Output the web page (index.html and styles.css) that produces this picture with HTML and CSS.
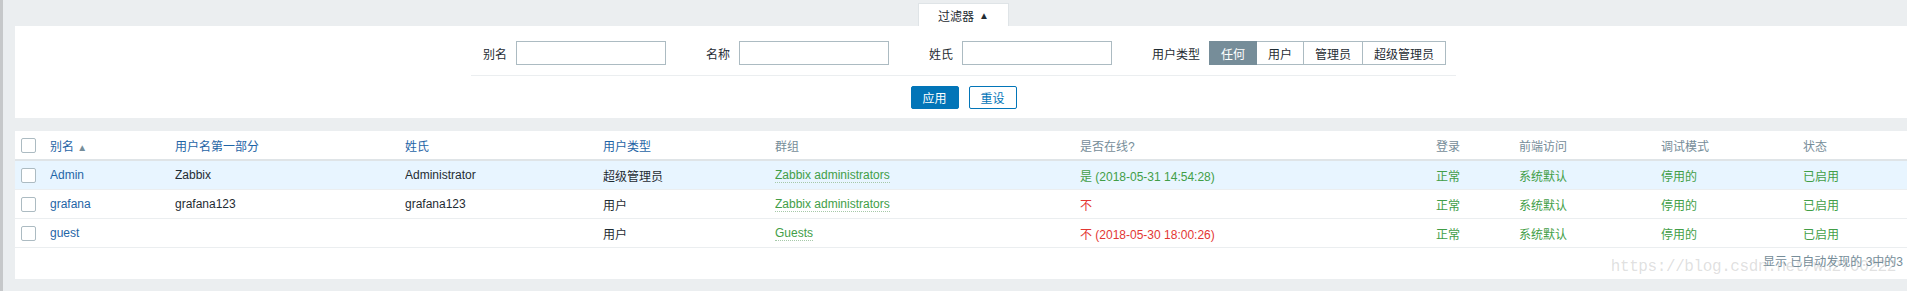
FILE: index.html
```html
<!DOCTYPE html>
<html lang="zh-CN">
<head>
  <meta charset="UTF-8">
  <title>用户</title>
  <link rel="stylesheet" href="styles.css">
</head>
<body>
  <div class="page">

    <div class="filter-tabs">
      <div class="tab">过滤器 <span class="arrow">▲</span></div>
    </div>

    <div class="filter">
      <div class="filter-inner">
        <div class="filter-row">
          <label class="lbl">别名</label>
          <input class="field" type="text">
          <label class="lbl spaced">名称</label>
          <input class="field" type="text">
          <label class="lbl spaced">姓氏</label>
          <input class="field" type="text">
          <label class="lbl spaced">用户类型</label>
          <div class="segmented">
            <span class="seg active">任何</span>
            <span class="seg">用户</span>
            <span class="seg">管理员</span>
            <span class="seg">超级管理员</span>
          </div>
        </div>
        <div class="filter-buttons">
          <button class="btn primary">应用</button>
          <button class="btn alt">重设</button>
        </div>
      </div>
    </div>

    <div class="list">
      <table class="users">
        <colgroup>
          <col style="width:35px">
          <col style="width:125px">
          <col style="width:230px">
          <col style="width:198px">
          <col style="width:172px">
          <col style="width:305px">
          <col style="width:356px">
          <col style="width:83px">
          <col style="width:142px">
          <col style="width:142px">
          <col>
        </colgroup>
        <thead>
          <tr>
            <th class="cb-cell"><span class="cb"></span></th>
            <th><a class="sort">别名</a> <span class="sort-arrow">▲</span></th>
            <th><a class="sort">用户名第一部分</a></th>
            <th><a class="sort">姓氏</a></th>
            <th><a class="sort">用户类型</a></th>
            <th>群组</th>
            <th>是否在线?</th>
            <th>登录</th>
            <th>前端访问</th>
            <th>调试模式</th>
            <th>状态</th>
          </tr>
        </thead>
        <tbody>
          <tr class="hover">
            <td class="cb-cell"><span class="cb"></span></td>
            <td><a class="link">Admin</a></td>
            <td>Zabbix</td>
            <td>Administrator</td>
            <td>超级管理员</td>
            <td><a class="link-alt">Zabbix administrators</a></td>
            <td class="green">是 (2018-05-31 14:54:28)</td>
            <td class="green">正常</td>
            <td class="green">系统默认</td>
            <td class="green">停用的</td>
            <td class="green">已启用</td>
          </tr>
          <tr>
            <td class="cb-cell"><span class="cb"></span></td>
            <td><a class="link">grafana</a></td>
            <td>grafana123</td>
            <td>grafana123</td>
            <td>用户</td>
            <td><a class="link-alt">Zabbix administrators</a></td>
            <td class="red">不</td>
            <td class="green">正常</td>
            <td class="green">系统默认</td>
            <td class="green">停用的</td>
            <td class="green">已启用</td>
          </tr>
          <tr>
            <td class="cb-cell"><span class="cb"></span></td>
            <td><a class="link">guest</a></td>
            <td></td>
            <td></td>
            <td>用户</td>
            <td><a class="link-alt">Guests</a></td>
            <td class="red">不 (2018-05-30 18:00:26)</td>
            <td class="green">正常</td>
            <td class="green">系统默认</td>
            <td class="green">停用的</td>
            <td class="green">已启用</td>
          </tr>
        </tbody>
      </table>
      <div class="table-stats">
        <span class="watermark">https://blog.csdn.net/wu2700222</span>
        <span class="stats-text">显示 已自动发现的 3中的3</span>
      </div>
    </div>

  </div>
</body>
</html>
```

FILE: styles.css
```css
html, body {
  margin: 0;
  height: 100%;
}

body {
  background-color: #ebeef0;
  font-family: "Liberation Sans", Arial, "Noto Sans CJK SC", sans-serif;
  font-size: 12px;
  color: #1f2c33;
  border-left: 3px solid #c6c8ca;
  overflow: hidden;
}

.page {
  padding: 3px 0 0 12px;
  margin-right: -5px;
}

/* filter tab */
.filter-tabs {
  display: flex;
  justify-content: center;
}

.tab {
  width: 91px;
  height: 23px;
  background-color: #fff;
  border: 1px solid #dfe4e7;
  border-bottom: none;
  display: flex;
  align-items: center;
  justify-content: center;
  box-sizing: border-box;
}

.tab .arrow {
  font-size: 10px;
  margin-left: 5px;
}

/* filter form */
.filter {
  background-color: #fff;
  padding: 15px 0 9px;
}

.filter-inner {
  width: 985px;
  margin: 0 auto;
}

.filter-row {
  display: flex;
  align-items: center;
  justify-content: center;
  height: 24px;
  padding-bottom: 10px;
  padding-left: 2px;
  border-bottom: 1px solid #ebeef0;
}

.lbl {
  margin-right: 9px;
}

.lbl.spaced {
  margin-left: 40px;
}

.field {
  width: 150px;
  height: 24px;
  box-sizing: border-box;
  border: 1px solid #acbbc2;
  margin: 0;
  padding: 0 4px;
}

.segmented {
  display: flex;
  height: 24px;
}

.seg {
  display: flex;
  align-items: center;
  padding: 0 11px;
  border: 1px solid #acbbc2;
  border-left: none;
}

.seg:first-child {
  border-left: 1px solid #768d99;
}

.seg.active {
  background-color: #768d99;
  border-color: #768d99;
  color: #fff;
}

.filter-buttons {
  display: flex;
  justify-content: center;
  gap: 10px;
  margin-top: 10px;
}

.btn {
  width: 48px;
  height: 23px;
  padding: 0;
  font-family: inherit;
  font-size: 12px;
  border-radius: 2px;
  border: 1px solid #0275b8;
}

.btn.primary {
  background-color: #0275b8;
  color: #fff;
}

.btn.alt {
  background-color: #fff;
  color: #0275b8;
}

/* user list */
.list {
  background-color: #fff;
  margin-top: 13px;
}

.users {
  width: 100%;
  border-collapse: collapse;
  table-layout: fixed;
}

.users th,
.users td {
  text-align: left;
  padding: 0 5px 0 0;
  white-space: nowrap;
  overflow: hidden;
  font-weight: normal;
}

.users th {
  height: 28px;
  color: #768d99;
  border-bottom: 2px solid #dfe4e7;
}

.users td {
  height: 28px;
  border-bottom: 1px solid #ebeef0;
}

.users tr.hover td {
  background-color: #e8f5ff;
}

.users .cb-cell {
  padding-left: 6px;
}

.cb {
  display: block;
  width: 13px;
  height: 13px;
  border: 1px solid #acbbc2;
  border-radius: 2px;
  background-color: #fff;
}

.sort,
.link {
  color: #1f65a6;
}

.sort-arrow {
  font-size: 10px;
  color: #768d99;
}

.link-alt {
  color: #429e47;
  border-bottom: 1px dotted #a6c9a9;
}

.green {
  color: #429e47;
}

.red {
  color: #e33734;
}

.table-stats {
  height: 31px;
  line-height: 29px;
  text-align: right;
  padding-right: 9px;
  color: #768d99;
  position: relative;
}

.stats-text {
  position: relative;
}

.watermark {
  position: absolute;
  right: 16px;
  top: 8px;
  line-height: 22px;
  font-family: "Liberation Mono", monospace;
  font-size: 16px;
  letter-spacing: -0.4px;
  color: rgba(150, 150, 150, 0.3);
}
```
